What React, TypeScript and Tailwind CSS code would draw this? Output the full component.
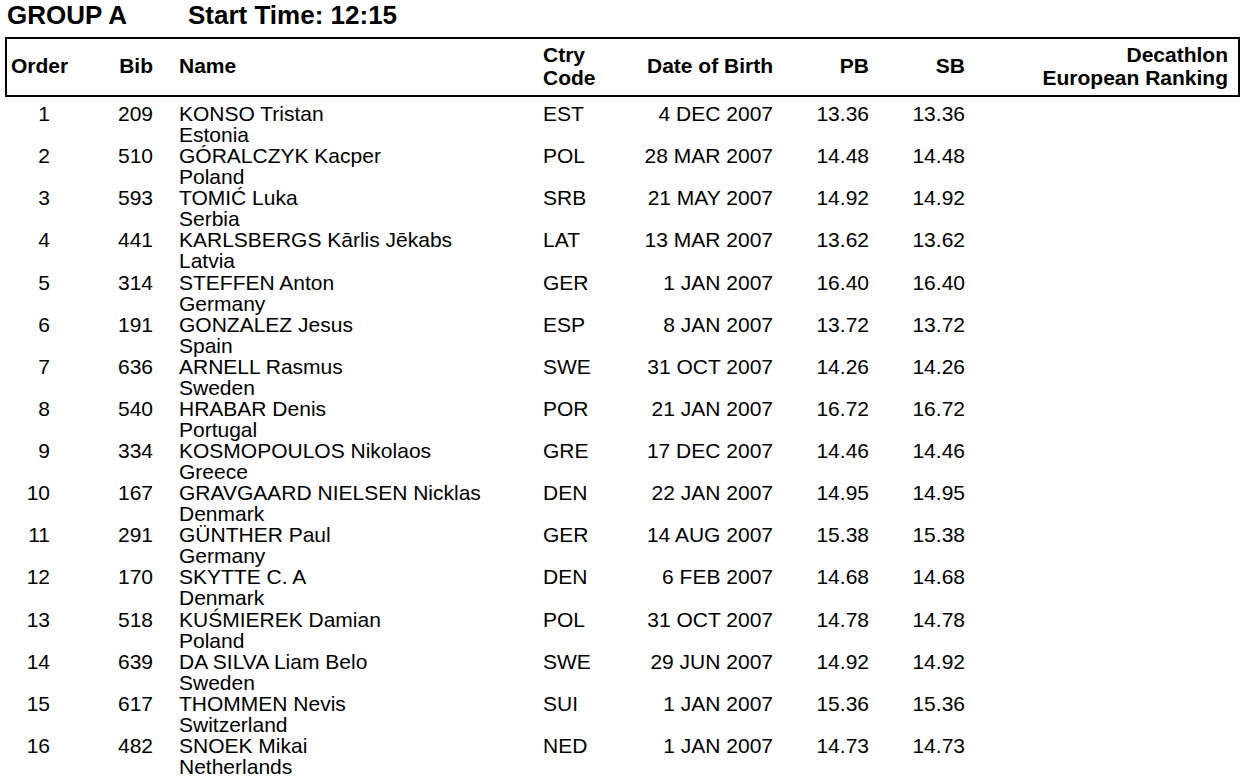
const athletes = [
  { order: 1, bib: 209, name: "KONSO Tristan", country: "Estonia", code: "EST", dob: "4 DEC 2007", pb: "13.36", sb: "13.36" },
  { order: 2, bib: 510, name: "GÓRALCZYK Kacper", country: "Poland", code: "POL", dob: "28 MAR 2007", pb: "14.48", sb: "14.48" },
  { order: 3, bib: 593, name: "TOMIĆ Luka", country: "Serbia", code: "SRB", dob: "21 MAY 2007", pb: "14.92", sb: "14.92" },
  { order: 4, bib: 441, name: "KARLSBERGS Kārlis Jēkabs", country: "Latvia", code: "LAT", dob: "13 MAR 2007", pb: "13.62", sb: "13.62" },
  { order: 5, bib: 314, name: "STEFFEN Anton", country: "Germany", code: "GER", dob: "1 JAN 2007", pb: "16.40", sb: "16.40" },
  { order: 6, bib: 191, name: "GONZALEZ Jesus", country: "Spain", code: "ESP", dob: "8 JAN 2007", pb: "13.72", sb: "13.72" },
  { order: 7, bib: 636, name: "ARNELL Rasmus", country: "Sweden", code: "SWE", dob: "31 OCT 2007", pb: "14.26", sb: "14.26" },
  { order: 8, bib: 540, name: "HRABAR Denis", country: "Portugal", code: "POR", dob: "21 JAN 2007", pb: "16.72", sb: "16.72" },
  { order: 9, bib: 334, name: "KOSMOPOULOS Nikolaos", country: "Greece", code: "GRE", dob: "17 DEC 2007", pb: "14.46", sb: "14.46" },
  { order: 10, bib: 167, name: "GRAVGAARD NIELSEN Nicklas", country: "Denmark", code: "DEN", dob: "22 JAN 2007", pb: "14.95", sb: "14.95" },
  { order: 11, bib: 291, name: "GÜNTHER Paul", country: "Germany", code: "GER", dob: "14 AUG 2007", pb: "15.38", sb: "15.38" },
  { order: 12, bib: 170, name: "SKYTTE C. A", country: "Denmark", code: "DEN", dob: "6 FEB 2007", pb: "14.68", sb: "14.68" },
  { order: 13, bib: 518, name: "KUŚMIEREK Damian", country: "Poland", code: "POL", dob: "31 OCT 2007", pb: "14.78", sb: "14.78" },
  { order: 14, bib: 639, name: "DA SILVA Liam Belo", country: "Sweden", code: "SWE", dob: "29 JUN 2007", pb: "14.92", sb: "14.92" },
  { order: 15, bib: 617, name: "THOMMEN Nevis", country: "Switzerland", code: "SUI", dob: "1 JAN 2007", pb: "15.36", sb: "15.36" },
  { order: 16, bib: 482, name: "SNOEK Mikai", country: "Netherlands", code: "NED", dob: "1 JAN 2007", pb: "14.73", sb: "14.73" },
];

export default function App() {
  return (
    <div className="w-[1242px] h-[782px] overflow-hidden bg-white text-black font-['Liberation_Sans',Arial,sans-serif]">
      {/* title */}
      <div className="flex h-[30px] items-center font-bold text-[26px] leading-[30px]">
        <span className="pl-[7px] w-[188px]">GROUP A</span>
        <span>Start Time: 12:15</span>
      </div>

      {/* header box */}
      <div className="mt-[7px] ml-[5px] w-[1235px] h-[60px] pb-[3px] border-2 border-black flex items-center font-bold text-[21px] leading-[23px]">
        <div className="w-[43px] pl-[4px] whitespace-nowrap">Order</div>
        <div className="w-[103px] text-right">Bib</div>
        <div className="w-[390px] pl-[26px]">Name</div>
        <div className="w-[100px]">Ctry<br />Code</div>
        <div className="w-[130px] text-right">Date of Birth</div>
        <div className="w-[96px] text-right">PB</div>
        <div className="w-[96px] text-right">SB</div>
        <div className="flex-1 text-right pr-[10px]">Decathlon<br />European Ranking</div>
      </div>

      {/* rows */}
      <div className="mt-[6px] text-[21px] leading-[21.07px]">
        {athletes.map((a) => (
          <div key={a.order} className="flex">
            <div className="w-[50px] text-right">{a.order}</div>
            <div className="w-[103px] text-right">{a.bib}</div>
            <div className="w-[390px] pl-[26px]">
              <div className="whitespace-nowrap">{a.name}</div>
              <div>{a.country}</div>
            </div>
            <div className="w-[100px]">{a.code}</div>
            <div className="w-[130px] text-right whitespace-nowrap">{a.dob}</div>
            <div className="w-[96px] text-right">{a.pb}</div>
            <div className="w-[96px] text-right">{a.sb}</div>
          </div>
        ))}
      </div>
    </div>
  );
}
